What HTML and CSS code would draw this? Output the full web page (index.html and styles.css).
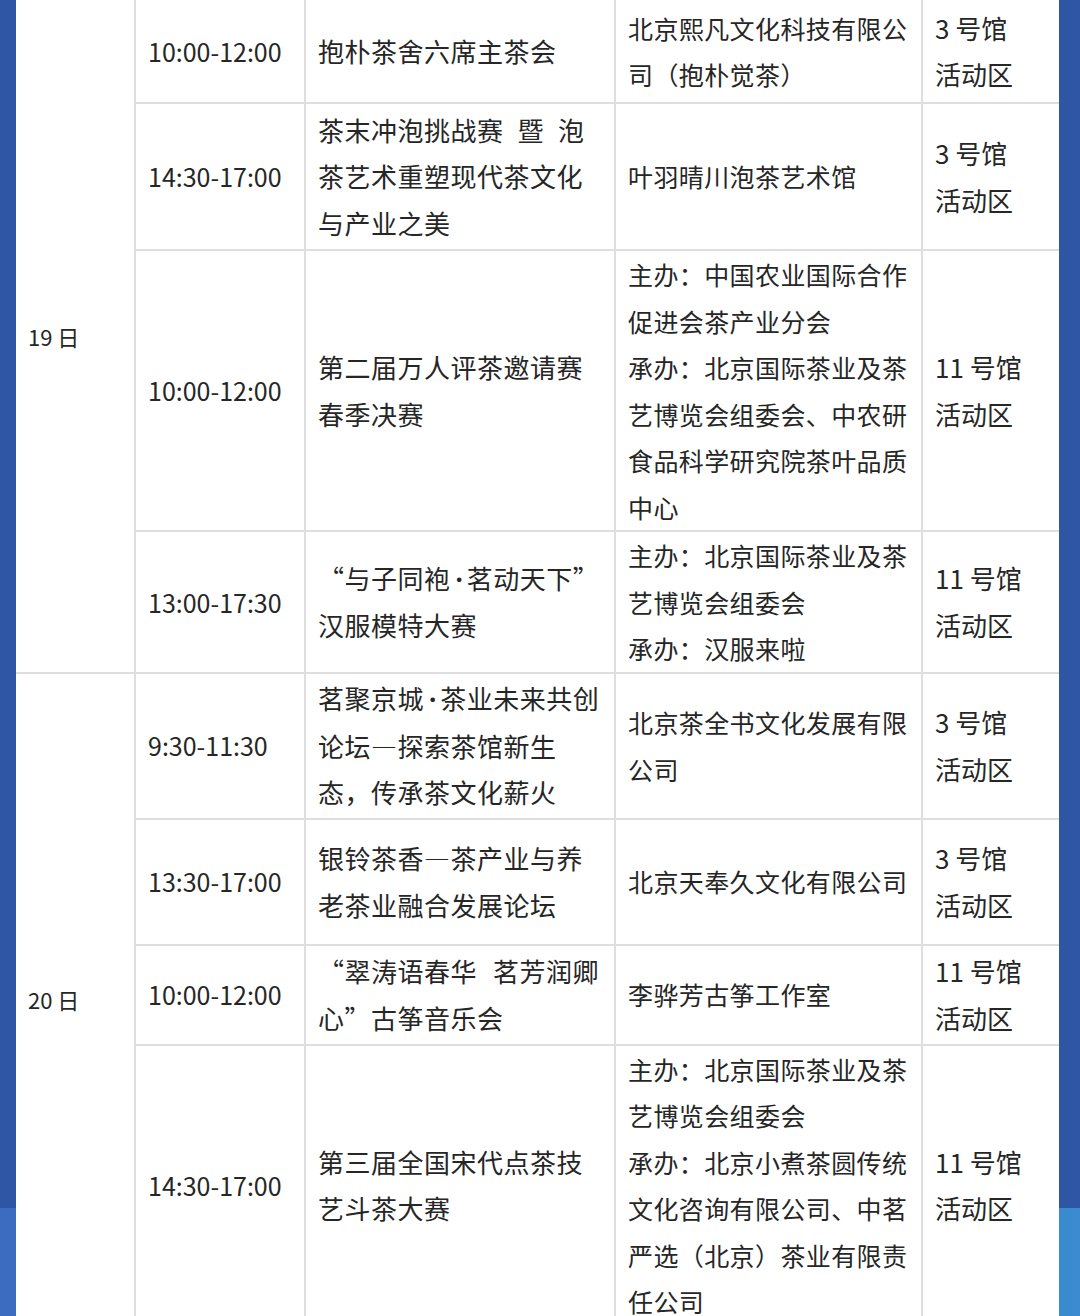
FILE: index.html
```html
<!DOCTYPE html>
<html lang="zh-CN">
<head>
<meta charset="utf-8">
<title>活动日程</title>
<link rel="stylesheet" href="styles.css">
</head>
<body>
<div class="page">
<table class="schedule">
<colgroup>
<col class="c-date"><col class="c-time"><col class="c-name"><col class="c-org"><col class="c-place">
</colgroup>
<tbody>
<tr class="r1">
<td class="date" rowspan="4">19 日</td>
<td class="time">10:00-12:00</td>
<td class="name">抱朴茶舍六席主茶会</td>
<td class="org">北京熙凡文化科技有限公<br>司（抱朴觉茶）</td>
<td class="place">3 号馆<br>活动区</td>
</tr>
<tr class="r2">
<td class="time">14:30-17:00</td>
<td class="name">茶末冲泡挑战赛<span class="gap"> </span>暨<span class="gap"> </span>泡<br>茶艺术重塑现代茶文化<br>与产业之美</td>
<td class="org">叶羽晴川泡茶艺术馆</td>
<td class="place">3 号馆<br>活动区</td>
</tr>
<tr class="r3">
<td class="time">10:00-12:00</td>
<td class="name">第二届万人评茶邀请赛<br>春季决赛</td>
<td class="org">主办：中国农业国际合作<br>促进会茶产业分会<br>承办：北京国际茶业及茶<br>艺博览会组委会、中农研<br>食品科学研究院茶叶品质<br>中心</td>
<td class="place">11 号馆<br>活动区</td>
</tr>
<tr class="r4">
<td class="time">13:00-17:30</td>
<td class="name">“与子同袍<span class="dot">·</span>茗动天下”<br>汉服模特大赛</td>
<td class="org">主办：北京国际茶业及茶<br>艺博览会组委会<br>承办：汉服来啦</td>
<td class="place">11 号馆<br>活动区</td>
</tr>
<tr class="r5">
<td class="date" rowspan="4">20 日</td>
<td class="time">9:30-11:30</td>
<td class="name">茗聚京城<span class="dot">·</span>茶业未来共创<br>论坛—探索茶馆新生<br>态，传承茶文化薪火</td>
<td class="org">北京茶全书文化发展有限<br>公司</td>
<td class="place">3 号馆<br>活动区</td>
</tr>
<tr class="r6">
<td class="time">13:30-17:00</td>
<td class="name">银铃茶香—茶产业与养<br>老茶业融合发展论坛</td>
<td class="org">北京天奉久文化有限公司</td>
<td class="place">3 号馆<br>活动区</td>
</tr>
<tr class="r7">
<td class="time">10:00-12:00</td>
<td class="name">“翠涛语春华<span class="gap wide"> </span>茗芳润卿<br>心”古筝音乐会</td>
<td class="org">李骅芳古筝工作室</td>
<td class="place">11 号馆<br>活动区</td>
</tr>
<tr class="r8">
<td class="time">14:30-17:00</td>
<td class="name">第三届全国宋代点茶技<br>艺斗茶大赛</td>
<td class="org">主办：北京国际茶业及茶<br>艺博览会组委会<br>承办：北京小煮茶圆传统<br>文化咨询有限公司、中茗<br>严选（北京）茶业有限责<br>任公司</td>
<td class="place">11 号馆<br>活动区</td>
</tr>
</tbody>
</table>
</div>
</body>
</html>
```

FILE: styles.css
```css
html, body {
  margin: 0;
  padding: 0;
}
body {
  width: 1080px;
  height: 1316px;
  overflow: hidden;
  background:
    linear-gradient(to bottom, #2f55a5 0, #2f55a5 1208px, transparent 1208px),
    linear-gradient(to right, #3c6cbf 0%, #3b7cc8 60%, #3a8bd0 100%);
  font-family: "Noto Sans CJK SC", "Noto Sans", sans-serif;
  color: #262626;
}
.page {
  padding: 0 21px 0 16px;
}
.schedule {
  width: 1043px;
  table-layout: fixed;
  border-collapse: collapse;
  background: #ffffff;
}
.c-date { width: 119px; }
.c-time { width: 170px; }
.c-name { width: 310px; }
.c-org { width: 307px; }
.c-place { width: 137px; }

.schedule td {
  border: 2px solid #dedede;
  padding: 0 12px;
  vertical-align: middle;
  line-height: 46.5px;
  white-space: nowrap;
}
.schedule tr:first-child td { border-top: none; }
.schedule tr td:first-child { border-left: none; }
.schedule tr td:last-child { border-right: none; }

.date {
  font-size: 22px;
}
.time {
  font-size: 25px;
}
.name {
  font-size: 26px;
  letter-spacing: 0.5px;
}
.org {
  font-size: 25px;
  letter-spacing: 0.4px;
}
.place {
  font-size: 26px;
  padding-left: 14px;
}
.dot {
  font-family: "Noto Sans", "DejaVu Sans", sans-serif;
  font-weight: 700;
  letter-spacing: 0;
  margin: 0 4px 0 5px;
}
.gap {
  display: inline-block;
  width: 14px;
}
.gap.wide {
  width: 16px;
}

.r1 { height: 103px; }
.r2 { height: 147px; }
.r3 { height: 281px; }
.r4 { height: 141px; }
.r5 { height: 146px; }
.r6 { height: 126px; }
.r7 { height: 100px; }
.r8 { height: 280px; }
```
